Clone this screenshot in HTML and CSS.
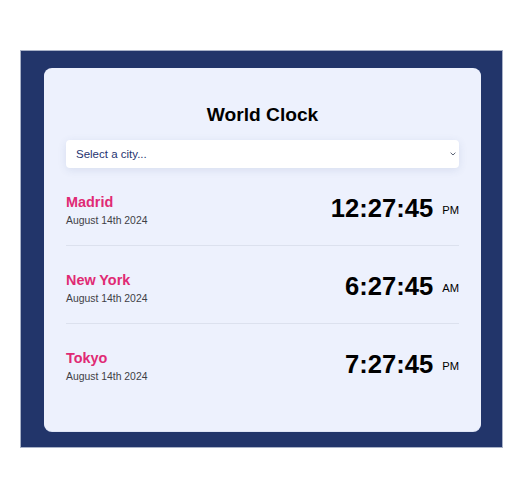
FILE: index.html
```html
<!DOCTYPE html>
<html>
<head>
<meta charset="utf-8">
<link rel="stylesheet" href="styles.css">
</head>
<body>
<div class="frame">
  <div class="card">
    <h1 class="title">World Clock</h1>
    <div class="select-wrap">
      <select class="select">
        <option>Select a city...</option>
      </select>
      <svg class="chevron" width="6" height="4" viewBox="0 0 6 4"><path d="M0.6 0.7 L3 3 L5.4 0.7" fill="none" stroke="#5a6275" stroke-width="1"/></svg>
    </div>
    <div class="list">
      <div class="row">
        <div class="info">
          <div class="city">Madrid</div>
          <div class="date">August 14th 2024</div>
        </div>
        <div class="time">12:27:45<span class="ampm">PM</span></div>
      </div>
      <div class="row">
        <div class="info">
          <div class="city">New York</div>
          <div class="date">August 14th 2024</div>
        </div>
        <div class="time">6:27:45<span class="ampm">AM</span></div>
      </div>
      <div class="row">
        <div class="info">
          <div class="city">Tokyo</div>
          <div class="date">August 14th 2024</div>
        </div>
        <div class="time">7:27:45<span class="ampm">PM</span></div>
      </div>
    </div>
  </div>
</div>
</body>
</html>
```

FILE: styles.css
```css
* { box-sizing: border-box; }
html, body { margin: 0; background: #ffffff; }
body {
  padding: 50px 21px 0 20px;
  font-family: "Liberation Sans", Arial, sans-serif;
}
.frame {
  background: #22356a;
  border: 1px solid #a9b2c8;
  padding: 17px 21px 16px 23px;
}
.card {
  background: #edf1fd;
  border-radius: 8px;
  padding: 35px 22px 30px;
  box-shadow: 0 1px 0 #dfe5f5;
}
.title {
  margin: 0 0 14px;
  text-align: center;
  font-size: 19.2px;
  line-height: 23px;
  font-weight: 700;
  color: #000;
}
.select-wrap { position: relative; }
.select {
  appearance: none;
  -webkit-appearance: none;
  display: block;
  width: 100%;
  height: 28px;
  border: none;
  border-radius: 4px;
  background: #ffffff;
  padding: 0 10px;
  font-family: "Liberation Sans", Arial, sans-serif;
  font-size: 11.5px;
  color: #1f3470;
  box-shadow: 0 2px 8px rgba(60, 80, 140, 0.12);
  outline: none;
}
.chevron {
  position: absolute;
  right: 3px;
  top: 12px;
}
.row {
  display: flex;
  justify-content: space-between;
  align-items: flex-start;
  padding: 26px 0 18px;
  border-bottom: 1px solid #dce1ee;
}
.row:last-child { border-bottom: none; }
.city {
  font-size: 14.4px;
  line-height: 17px;
  font-weight: 700;
  color: #e02a74;
}
.date {
  margin-top: 3px;
  font-size: 10.4px;
  line-height: 13px;
  color: #3f3f46;
}
.time {
  font-size: 25.6px;
  line-height: 29px;
  font-weight: 700;
  color: #000;
}
.ampm {
  margin-left: 9px;
  font-size: 11.2px;
  font-weight: 400;
  vertical-align: 3px;
}
```
